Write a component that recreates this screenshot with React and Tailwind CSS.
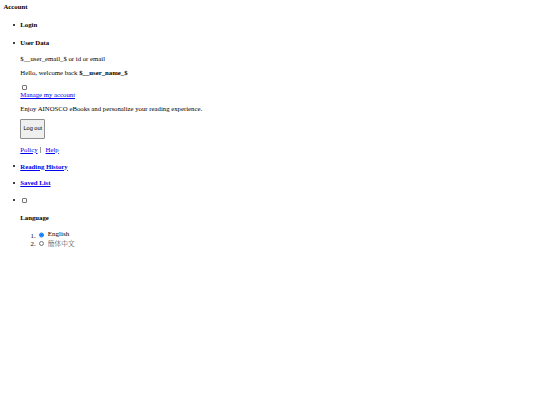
import React from 'react';

const linkCls = "text-[#0000ee] underline";

function Bullet({ children, className = "" }) {
  return (
    <li className={`grid grid-cols-[16.9px_1fr] ${className}`}>
      <span className="flex h-[7.8px] items-center justify-end pr-[5px]">
        <span className="h-[2px] w-[2px] rounded-full bg-black" />
      </span>
      <div>{children}</div>
    </li>
  );
}

function Checkbox({ className = "" }) {
  return (
    <span className={`block h-[5px] w-[5px] rounded-[1px] border-[0.6px] border-[#767676] bg-white ${className}`} />
  );
}

export default function App() {
  return (
    <div className="min-h-screen bg-white pl-[3.4px] pt-[3.4px] font-['Liberation_Serif',serif] text-[6.75px] leading-[7.8px] text-black">
      <div className="font-bold">Account</div>

      <ul className="mt-[9.9px]">
        <Bullet>
          <div className="font-bold">Login</div>
        </Bullet>

        <Bullet className="mt-[9.9px]">
          <div className="font-bold">User Data</div>
          <p className="mt-[8.2px]">$__user_email_$ or id or email</p>
          <p className="mt-[6.5px]">
            Hello, welcome back <b>$__user_name_$</b>
          </p>
          <div className="mt-[6.5px] flex h-[7.8px] items-center">
            <Checkbox className="ml-[1.7px]" />
          </div>
          <a href="#" className={linkCls}>Manage my account</a>
          <p className="mt-[6px]">Enjoy AINOSCO eBooks and personalize your reading experience.</p>
          <button className="mt-[6.5px] h-[20px] w-[25px] rounded-[1px] border-[0.5px] border-[#8f8f8f] bg-[#efefef] font-['Liberation_Sans',sans-serif] text-[5.6px] leading-none text-black">
            Log out
          </button>
          <p className="mt-[6.5px] flex items-center">
            <a href="#" className={linkCls}>Policy</a>
            <span className="ml-[2.5px] mr-[5px] h-[6px] w-[0.5px] bg-[#999]" />
            <a href="#" className={linkCls}>Help</a>
          </p>
        </Bullet>

        <Bullet className="mt-[9px]">
          <a href="#" className={`${linkCls} font-bold`}>Reading History</a>
        </Bullet>

        <Bullet className="mt-[9px]">
          <a href="#" className={`${linkCls} font-bold`}>Saved List</a>
        </Bullet>

        <Bullet className="mt-[9px]">
          <div className="flex h-[7.8px] items-center">
            <Checkbox className="ml-[1.7px]" />
          </div>
          <div className="mt-[10px] font-bold">Language</div>
          <ol className="mt-[9.5px] list-decimal pl-[17px]">
            <li>
              <span className="inline-flex items-center">
                <input type="radio" name="lang" defaultChecked className="mx-[1.5px] h-[5.5px] w-[5.5px]" />
                <span className="ml-[2px] text-[7px]">English</span>
              </span>
            </li>
            <li>
              <span className="inline-flex items-center">
                <input type="radio" name="lang" className="mx-[1.5px] h-[5.5px] w-[5.5px]" />
                <span className="ml-[2px] font-['Liberation_Serif','Noto_Sans_CJK_JP',serif] font-light text-[#333]">簡体中文</span>
              </span>
            </li>
          </ol>
        </Bullet>
      </ul>
    </div>
  );
}
